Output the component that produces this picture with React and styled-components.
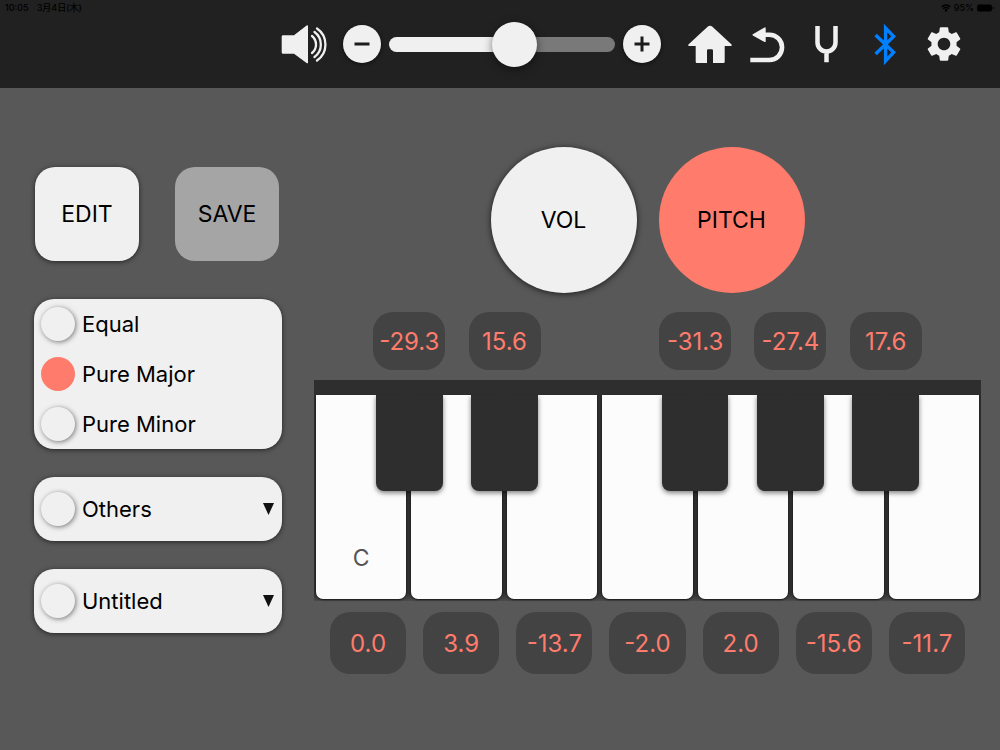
import React, { useState } from "react";
import styled, { createGlobalStyle, css } from "styled-components";
import { MdSettings } from "react-icons/md";

const color = {
  header: "#212121",
  page: "#585858",
  light: "#f0f0f0",
  muted: "#a5a5a5",
  coral: "#ff7b6c",
  pad: "#434343",
  ebony: "#2e2e2e",
  ivory: "#fcfcfc",
  blue: "#0080ff",
};

const GlobalStyle = createGlobalStyle`
  * { box-sizing: border-box; }
  body {
    margin: 0;
    min-height: 100vh;
    background: ${color.page};
    color: #000;
    font-family: Inter, "Noto Sans CJK JP", sans-serif;
  }
  button, input { font: inherit; color: inherit; margin: 0; }
  button { border: 0; padding: 0; cursor: pointer; }
`;

const Header = styled.header`
  background: ${color.header};
  padding-bottom: 16px;
`;

const StatusBar = styled.div`
  display: flex;
  justify-content: space-between;
  align-items: center;
  height: 16px;
  padding: 0 6px 0 5px;
  font-size: 9px;
  font-weight: 500;
  line-height: 16px;
`;

const StatusGroup = styled.div`
  display: flex;
  align-items: center;
  gap: ${(p) => p.$gap}px;
`;

const Toolbar = styled.div`
  display: flex;
  justify-content: flex-end;
  align-items: center;
  height: 56px;
  padding: 0 33px;
`;

const VolumeControl = styled.div`
  display: flex;
  align-items: center;
  gap: 8px;
  margin: 0 24px 0 16px;
`;

const RoundButton = styled.button`
  display: flex;
  align-items: center;
  justify-content: center;
  width: 38px;
  height: 38px;
  border-radius: 50%;
  background: ${color.light};
  box-shadow: 0 1px 4px rgba(0, 0, 0, 0.6);
`;

const Slider = styled.input`
  appearance: none;
  width: 226px;
  height: 45px;
  background: transparent;

  &::-webkit-slider-runnable-track {
    height: 15px;
    border-radius: 8px;
    background: linear-gradient(
      to right,
      ${color.light} ${(p) => p.value}%,
      #797979 ${(p) => p.value}%
    );
  }

  &::-webkit-slider-thumb {
    appearance: none;
    width: 45px;
    height: 45px;
    margin-top: -15px;
    border-radius: 50%;
    background: ${color.light};
    box-shadow: 0 2px 8px rgba(0, 0, 0, 0.5);
  }
`;

const ToolNav = styled.nav`
  display: flex;
  gap: 13px;
`;

const ToolButton = styled.button`
  display: flex;
  align-items: center;
  justify-content: center;
  width: 46px;
  height: 46px;
  background: transparent;
  color: ${(p) => (p.$active ? color.blue : color.light)};
`;

const Glyph = styled.svg`
  display: block;
  overflow: visible;
  flex: none;
`;

const Main = styled.main`
  display: grid;
  grid-template-columns: 248px minmax(0, 1fr);
  column-gap: 32px;
  align-items: start;
  padding: 59px 19px 40px 34px;
`;

const Sidebar = styled.section`
  display: flex;
  flex-direction: column;
  gap: 28px;
  padding-top: 20px;
`;

const Actions = styled.div`
  display: flex;
  justify-content: space-between;
  padding: 0 3px 10px 1px;
`;

const ActionButton = styled.button`
  width: 104px;
  height: 94px;
  border-radius: 20px;
  font-size: 23px;
  background: ${color.light};
  box-shadow: 0 1px 5px rgba(0, 0, 0, 0.6);

  &:disabled {
    color: #000;
    background: ${color.muted};
    box-shadow: none;
  }
`;

const Panel = styled.div`
  display: flex;
  flex-direction: column;
  justify-content: center;
  min-height: 64px;
  padding: 0 8px 0 7px;
  border-radius: 20px;
  background: ${color.light};
  box-shadow: 0 1px 5px rgba(0, 0, 0, 0.6);
`;

const OptionRow = styled.div`
  display: flex;
  align-items: center;
  justify-content: space-between;
  height: 50px;
`;

const OptionLabel = styled.label`
  display: flex;
  align-items: center;
  gap: 7px;
  font-size: 22px;
  line-height: 28px;
`;

const Radio = styled.input`
  appearance: none;
  width: 34px;
  height: 34px;
  border-radius: 50%;
  background: ${color.light};
  box-shadow: 1px 1px 5px rgba(0, 0, 0, 0.5);

  &:checked {
    background: ${color.coral};
    box-shadow: none;
  }
`;

const Disclosure = styled.button`
  display: flex;
  background: transparent;
`;

const Stage = styled.section`
  display: flex;
  flex-direction: column;
`;

const Modes = styled.div`
  display: flex;
  justify-content: center;
  gap: 22px;
  margin-bottom: 19px;
`;

const ModeButton = styled.button`
  width: 146px;
  height: 146px;
  border-radius: 50%;
  font-size: 23px;
  background: ${(p) => (p.$active ? color.coral : color.light)};
  ${(p) =>
    !p.$active &&
    css`
      box-shadow: 0 1px 6px rgba(0, 0, 0, 0.7);
    `}
`;

/* Six slots, each centred on the seam between two white keys. */
const SharpGrid = styled.div`
  display: grid;
  grid-template-columns: repeat(6, 1fr);
  justify-items: center;
  padding: 0 calc(100% / 14);
`;

const Pad = styled.button`
  border-radius: 20px;
  background: ${color.pad};
  color: ${color.coral};
  font-size: 24px;
`;

const SharpPad = styled(Pad)`
  grid-column: ${(p) => p.$slot};
  width: 72px;
  height: 58px;
`;

const NaturalPads = styled.div`
  display: grid;
  grid-template-columns: repeat(7, 1fr);
  gap: 17px;
  margin-top: 11px;
  padding: 0 16px;
`;

const NaturalPad = styled(Pad)`
  height: 62px;
`;

const Piano = styled.div`
  position: relative;
  margin-top: 10px;
  padding: 15px 2px 2px;
  background: linear-gradient(to top, #4c4c4c, ${color.ebony} 8px);
`;

const WhiteKeys = styled.div`
  display: grid;
  grid-template-columns: repeat(7, 1fr);
  gap: 5px;
`;

const WhiteKey = styled.button`
  display: flex;
  align-items: flex-end;
  justify-content: center;
  height: 204px;
  padding-bottom: 27px;
  border-radius: 0 0 7px 7px;
  background: ${color.ivory};
  color: #555;
  font-size: 23px;
  line-height: 28px;
  box-shadow: 0 1px 2px rgba(0, 0, 0, 0.7);
`;

const BlackKeys = styled(SharpGrid)`
  position: absolute;
  top: 15px;
  left: 0;
  right: 0;
  pointer-events: none;
`;

/* The clip keeps the key's shadow off the rail above it. */
const BlackKey = styled.button`
  grid-column: ${(p) => p.$slot};
  width: 70%;
  height: 96px;
  border-radius: 0 0 8px 8px;
  background: ${color.ebony};
  box-shadow: 0 2px 5px rgba(0, 0, 0, 0.5);
  clip-path: inset(0 -8px -8px);
  pointer-events: auto;
`;

const SpeakerIcon = () => (
  <Glyph width="46" height="46" viewBox="0 0 46 46" fill="none" aria-hidden="true">
    <path
      d="M2 14.3H13L25.6 4.6Q27 3.8 27 5.2V41.4Q27 42.8 25.6 42L13 32.7H2Q.7 32.7 .7 31.4V15.6Q.7 14.3 2 14.3Z"
      fill={color.light}
    />
    <g stroke={color.light} strokeWidth="2.3" strokeLinecap="round">
      <path d="M31 15A11 11 0 0 1 31 32" />
      <path d="M33.5 11A15.5 15.5 0 0 1 33.5 36" />
      <path d="M36 7.5A19.4 19.4 0 0 1 36 39.5" />
    </g>
  </Glyph>
);

const HomeIcon = () => (
  <Glyph width="46" height="46" viewBox="0 0 46 46" fill="currentColor" aria-hidden="true">
    <path d="M3.4 23.6L22.6 5.8Q25 3.8 27.4 5.8L46.6 23.6Q47.4 24.8 46 25H39.7V40.8Q39.7 42 38.5 42H28V29.5Q28 28.3 26.8 28.3H23.2Q22 28.3 22 29.5V42H11.9Q10.7 42 10.7 40.8V25H4Q2.6 24.8 3.4 23.6Z" />
  </Glyph>
);

const UndoIcon = () => (
  <Glyph width="46" height="46" viewBox="0 0 46 46" fill="none" aria-hidden="true">
    <path d="M20 13.7H25.4A12.65 12.65 0 0 1 25.4 39H6.3" stroke="currentColor" strokeWidth="4.6" />
    <path
      d="M8.8 13.2L20.6 6.4Q21.7 6 21.7 7.2V20.2Q21.7 21.4 20.6 21L8.8 14.4Q8 13.8 8.8 13.2Z"
      fill="currentColor"
    />
  </Glyph>
);

const TuningForkIcon = () => (
  <Glyph
    width="46"
    height="46"
    viewBox="0 0 46 46"
    fill="none"
    stroke="currentColor"
    strokeWidth="4.5"
    aria-hidden="true"
  >
    <path d="M14.5 5V21.5A9 9 0 0 0 32.5 21.5V5M23.5 30V41.3" />
  </Glyph>
);

const BluetoothIcon = () => (
  <Glyph
    width="46"
    height="46"
    viewBox="0 0 46 46"
    fill="none"
    stroke="currentColor"
    strokeWidth="3.4"
    strokeMiterlimit="10"
    aria-hidden="true"
  >
    <path d="M13.6 14L31.6 31.4L23.6 40V7L31.6 15.4L13.6 33" />
  </Glyph>
);

const SignIcon = ({ plus }) => (
  <Glyph width="16" height="16" viewBox="0 0 16 16" stroke="#1c1c1c" strokeWidth="3" aria-hidden="true">
    <path d={plus ? "M0.5 8H15.5M8 0.5V15.5" : "M0.5 8H15.5"} />
  </Glyph>
);

const TriangleIcon = () => (
  <Glyph width="11" height="12" viewBox="0 0 11 12" fill="#111" aria-hidden="true">
    <path d="M0 0H11L5.5 12Z" />
  </Glyph>
);

const WifiIcon = () => (
  <Glyph width="10" height="8" viewBox="0 0 10 8" fill="none" stroke="#000" strokeWidth="1.4" aria-hidden="true">
    <path d="M.6 2.9Q5-1 9.4 2.9M2.2 4.7Q5 2.4 7.8 4.7" />
    <circle cx="5" cy="6.4" r=".6" />
  </Glyph>
);

const BatteryIcon = () => (
  <Glyph width="17" height="8" viewBox="0 0 17 8" aria-hidden="true">
    <rect width="15" height="7" y=".5" rx="2" fill="#000" />
    <rect x="15.8" y="2.7" width="1" height="2.6" fill="#000" />
  </Glyph>
);

const sharps = [
  { slot: 1, note: "C sharp", cents: "-29.3" },
  { slot: 2, note: "D sharp", cents: "15.6" },
  { slot: 4, note: "F sharp", cents: "-31.3" },
  { slot: 5, note: "G sharp", cents: "-27.4" },
  { slot: 6, note: "A sharp", cents: "17.6" },
];

const naturals = [
  { note: "C", cents: "0.0" },
  { note: "D", cents: "3.9" },
  { note: "E", cents: "-13.7" },
  { note: "F", cents: "-2.0" },
  { note: "G", cents: "2.0" },
  { note: "A", cents: "-15.6" },
  { note: "B", cents: "-11.7" },
];

const panels = [
  { options: ["Equal", "Pure Major", "Pure Minor"] },
  { options: ["Others"], menu: true },
  { options: ["Untitled"], menu: true },
];

export default function App() {
  const [volume, setVolume] = useState(57);
  const [temperament, setTemperament] = useState("Pure Major");
  const [mode, setMode] = useState("PITCH");
  const nudge = (step) => setVolume((v) => Math.min(100, Math.max(0, v + step)));

  return (
    <>
      <GlobalStyle />
      <Header>
        <StatusBar>
          <StatusGroup $gap={8}>
            <span>10:05</span>
            <span>3月4日(木)</span>
          </StatusGroup>
          <StatusGroup $gap={3}>
            <WifiIcon />
            <span>95%</span>
            <BatteryIcon />
          </StatusGroup>
        </StatusBar>
        <Toolbar>
          <SpeakerIcon />
          <VolumeControl>
            <RoundButton aria-label="Volume down" onClick={() => nudge(-1)}>
              <SignIcon />
            </RoundButton>
            <Slider
              type="range"
              min="0"
              max="100"
              aria-label="Volume"
              value={volume}
              onChange={(e) => setVolume(Number(e.target.value))}
            />
            <RoundButton aria-label="Volume up" onClick={() => nudge(1)}>
              <SignIcon plus />
            </RoundButton>
          </VolumeControl>
          <ToolNav>
            <ToolButton aria-label="Home"><HomeIcon /></ToolButton>
            <ToolButton aria-label="Back"><UndoIcon /></ToolButton>
            <ToolButton aria-label="Tuning"><TuningForkIcon /></ToolButton>
            <ToolButton aria-label="Bluetooth" $active><BluetoothIcon /></ToolButton>
            <ToolButton aria-label="Settings"><MdSettings size={42} /></ToolButton>
          </ToolNav>
        </Toolbar>
      </Header>
      <Main>
        <Sidebar>
          <Actions>
            <ActionButton>EDIT</ActionButton>
            <ActionButton disabled>SAVE</ActionButton>
          </Actions>
          {panels.map(({ options, menu }) => (
            <Panel key={options[0]}>
              {options.map((name) => (
                <OptionRow key={name}>
                  <OptionLabel>
                    <Radio
                      type="radio"
                      name="temperament"
                      checked={temperament === name}
                      onChange={() => setTemperament(name)}
                    />
                    {name}
                  </OptionLabel>
                  {menu && (
                    <Disclosure aria-label={`Show ${name}`}>
                      <TriangleIcon />
                    </Disclosure>
                  )}
                </OptionRow>
              ))}
            </Panel>
          ))}
        </Sidebar>
        <Stage>
          <Modes>
            {["VOL", "PITCH"].map((name) => (
              <ModeButton key={name} $active={mode === name} onClick={() => setMode(name)}>
                {name}
              </ModeButton>
            ))}
          </Modes>
          <SharpGrid>
            {sharps.map(({ slot, note, cents }) => (
              <SharpPad key={note} $slot={slot}>{cents}</SharpPad>
            ))}
          </SharpGrid>
          <Piano>
            <WhiteKeys>
              {naturals.map(({ note }) => (
                <WhiteKey key={note} aria-label={note}>{note === "C" && note}</WhiteKey>
              ))}
            </WhiteKeys>
            <BlackKeys>
              {sharps.map(({ slot, note }) => (
                <BlackKey key={note} $slot={slot} aria-label={note} />
              ))}
            </BlackKeys>
          </Piano>
          <NaturalPads>
            {naturals.map(({ note, cents }) => (
              <NaturalPad key={note}>{cents}</NaturalPad>
            ))}
          </NaturalPads>
        </Stage>
      </Main>
    </>
  );
}
